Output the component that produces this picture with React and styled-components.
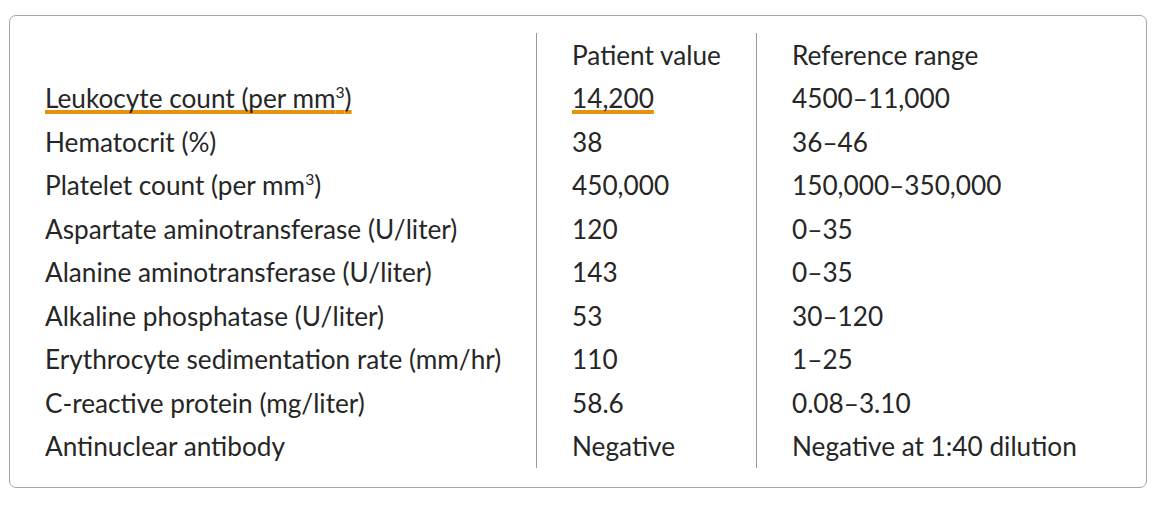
import React from "react";
import styled, { createGlobalStyle } from "styled-components";

const rows = [
  { name: "Leukocyte count (per mm", sup: "3", value: "14,200", range: "4500–11,000", flag: true },
  { name: "Hematocrit (%)", value: "38", range: "36–46" },
  { name: "Platelet count (per mm", sup: "3", value: "450,000", range: "150,000–350,000" },
  { name: "Aspartate aminotransferase (U/liter)", value: "120", range: "0–35" },
  { name: "Alanine aminotransferase (U/liter)", value: "143", range: "0–35" },
  { name: "Alkaline phosphatase (U/liter)", value: "53", range: "30–120" },
  { name: "Erythrocyte sedimentation rate (mm/hr)", value: "110", range: "1–25" },
  { name: "C-reactive protein (mg/liter)", value: "58.6", range: "0.08–3.10" },
  { name: "Antinuclear antibody", value: "Negative", range: "Negative at 1:40 dilution" },
];

const App = () => {
  return (
    <>
      <GlobalStyle />
      <Page>
        <Card>
          <Table>
            <Cell />
            <Cell $divided>Patient value</Cell>
            <Cell $divided>Reference range</Cell>
            {rows.map((row) => (
              <React.Fragment key={row.name}>
                <Cell>
                  <Label $flag={row.flag}>
                    {row.name}
                    {row.sup && <sup>{row.sup}</sup>}
                    {row.sup && ")"}
                  </Label>
                </Cell>
                <Cell $divided>
                  <Label $flag={row.flag}>{row.value}</Label>
                </Cell>
                <Cell $divided>{row.range}</Cell>
              </React.Fragment>
            ))}
          </Table>
        </Card>
      </Page>
    </>
  );
};

export default App;

const GlobalStyle = createGlobalStyle`
  body {
    margin: 0;
    background: #fff;
    font-family: Lato, "Open Sans", sans-serif;
    color: #262626;
  }
`;

const Page = styled.div`
  padding: 15px 9px;
`;

const Card = styled.div`
  box-sizing: border-box;
  width: 1138px;
  height: 473px;
  border: 1px solid #9ea7b3;
  border-radius: 7px;
  padding: 17px 0 0;
`;

const Table = styled.div`
  display: grid;
  grid-template-columns: 526px 220px 1fr;
  grid-auto-rows: 43.5px;
`;

const Cell = styled.div`
  display: flex;
  align-items: center;
  padding-left: 35px;
  font-size: 26.2px;
  white-space: nowrap;
  border-left: ${(p) => (p.$divided ? "1.5px solid #9a9a9a" : "none")};

  sup {
    font-size: 0.6em;
    line-height: 0;
    vertical-align: 0.62em;
  }
`;

const Label = styled.span`
  text-decoration: ${(p) => (p.$flag ? "underline" : "none")};
  text-decoration-color: #e5930f;
  text-decoration-thickness: 4px;
  text-underline-offset: 2px;
  text-decoration-skip-ink: none;
`;
